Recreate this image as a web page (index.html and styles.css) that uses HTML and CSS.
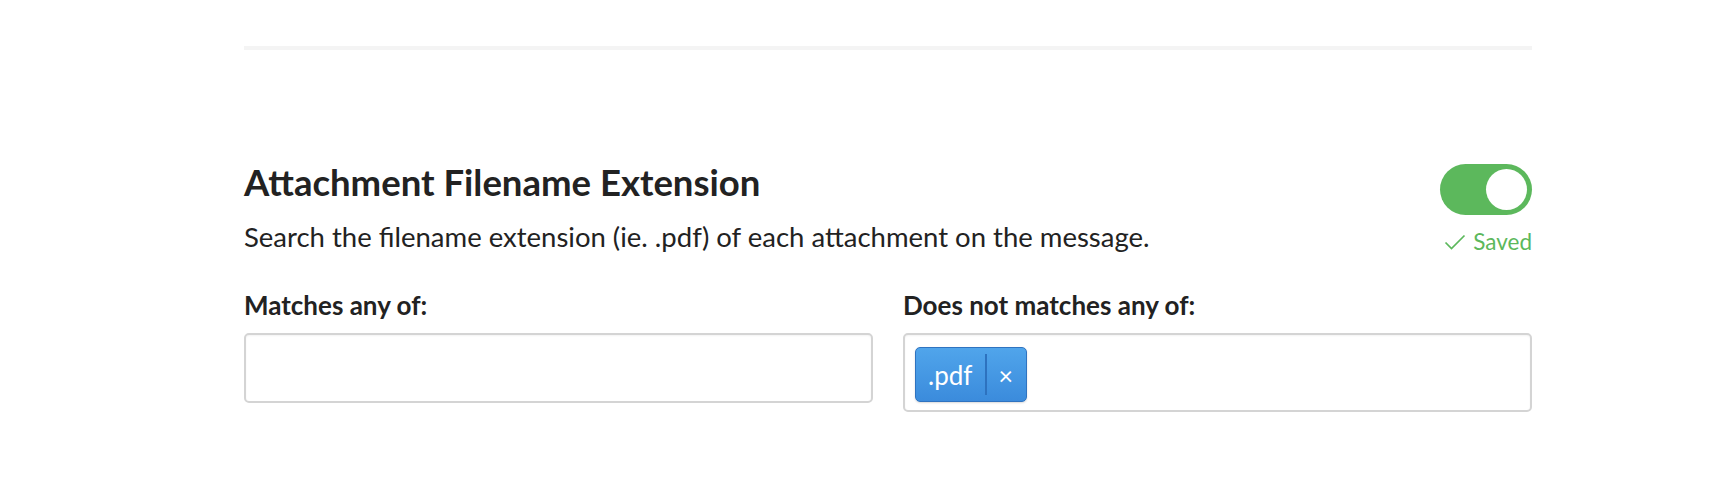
FILE: index.html
```html
<!DOCTYPE html>
<html>
<head>
<meta charset="utf-8">
<link rel="stylesheet" href="styles.css">
</head>
<body>
<div class="page">
  <div class="divider"></div>
  <section class="rule">
    <div class="rule-head">
      <div class="rule-text">
        <h2 class="rule-title">Attachment Filename Extension</h2>
        <p class="rule-desc">Search the filename extension (ie. .pdf) of each attachment on the message.</p>
      </div>
      <div class="rule-status">
        <div class="toggle on"><span class="knob"></span></div>
        <div class="saved">
          <svg class="check" viewBox="0 0 22 18" width="22" height="18"><path d="M1.5 9.5 L7.5 15.5 L20.5 2.5" fill="none" stroke="currentColor" stroke-width="1.7"/></svg>
          <span>Saved</span>
        </div>
      </div>
    </div>
    <div class="fields">
      <div class="field">
        <label class="field-label">Matches any of:</label>
        <div class="tag-input"></div>
      </div>
      <div class="field">
        <label class="field-label">Does not matches any of:</label>
        <div class="tag-input has-tags">
          <span class="tag"><span class="tag-text">.pdf</span><span class="tag-x">×</span></span>
        </div>
      </div>
    </div>
  </section>
</div>
</body>
</html>
```

FILE: styles.css
```css
html, body {
  margin: 0;
  padding: 0;
  background: #ffffff;
}
body {
  font-family: Lato, "Open Sans", "Liberation Sans", sans-serif;
  color: #222222;
}
.page {
  width: 1288px;
  margin-left: 244px;
  padding-top: 46px;
}
.divider {
  height: 4px;
  background: #f4f4f4;
}
.rule {
  padding-top: 110px;
}
.rule-head {
  display: flex;
  justify-content: space-between;
  align-items: flex-start;
}
.rule-title {
  margin: 0;
  font-size: 36.5px;
  font-weight: 700;
  line-height: 44px;
  color: #222222;
}
.rule-desc {
  margin: 16px 0 0 0;
  font-size: 27.5px;
  line-height: 34px;
  color: #222222;
}
.rule-status {
  display: flex;
  flex-direction: column;
  align-items: flex-end;
  padding-top: 4px;
}
.toggle {
  width: 92px;
  height: 51px;
  border-radius: 26px;
  background: #5cb85c;
  display: flex;
  align-items: center;
  justify-content: flex-end;
  padding: 0 5px;
  box-sizing: border-box;
}
.knob {
  width: 41px;
  height: 41px;
  border-radius: 50%;
  background: #ffffff;
}
.saved {
  display: flex;
  align-items: center;
  gap: 7px;
  margin-top: 12px;
  color: #5cb85c;
  font-size: 22.5px;
  line-height: 30px;
}
.check {
  display: block;
}
.fields {
  display: grid;
  grid-template-columns: 1fr 1fr;
  column-gap: 30px;
  margin-top: 32px;
  align-items: start;
}
.field {
  display: flex;
  flex-direction: column;
}
.field-label {
  font-size: 26px;
  font-weight: 700;
  line-height: 32px;
  margin-bottom: 12px;
}
.tag-input {
  height: 70px;
  border: 2px solid #d4d4d4;
  border-radius: 5px;
  box-sizing: border-box;
  box-shadow: inset 0 1px 2px rgba(0,0,0,0.05);
}
.tag-input.has-tags {
  height: 79px;
  padding: 12px 10px;
  display: flex;
  align-items: flex-start;
}
.tag {
  display: inline-flex;
  align-items: stretch;
  height: 55px;
  box-sizing: border-box;
  border: 1px solid #2f73c0;
  border-radius: 5px;
  background: linear-gradient(#50a5eb, #3b8bdc);
  color: #ffffff;
  box-shadow: 0 1px 2px rgba(0,0,0,0.15);
}
.tag-text {
  display: flex;
  align-items: center;
  padding: 0 13px 0 12px;
  font-size: 26px;
  border-right: 2px solid #2d72bf;
  margin: 6px 0;
}
.tag-x {
  display: flex;
  align-items: center;
  padding: 0 13px 0 11px;
  font-size: 25px;
}
```
